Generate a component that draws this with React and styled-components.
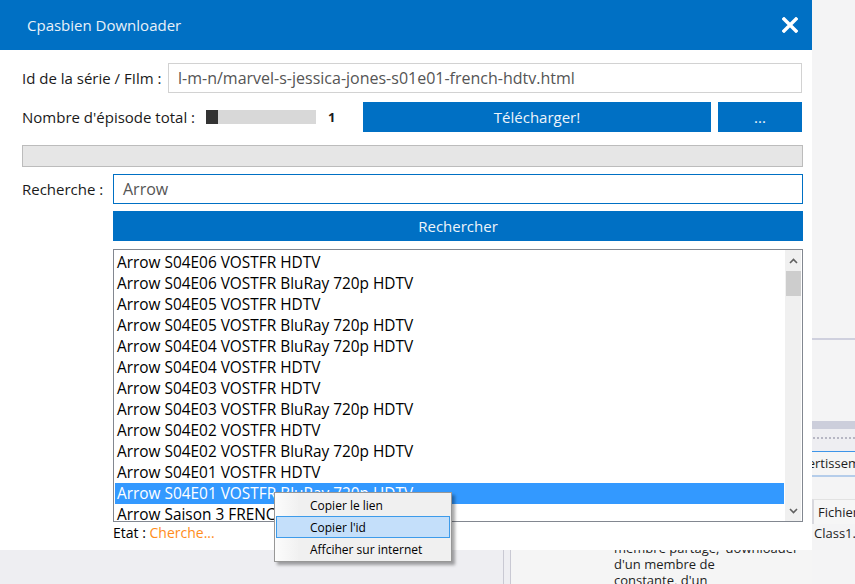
import React from 'react';
import styled, { createGlobalStyle } from 'styled-components';

const GlobalStyle = createGlobalStyle`
  html, body {
    margin: 0;
    padding: 0;
    background: #eeeef2;
  }
  body {
    font-family: "Open Sans", "Noto Sans", sans-serif;
  }
`;

const BLUE = '#0070c4';

const Desktop = styled.div`
  position: relative;
  width: 855px;
  height: 584px;
  overflow: hidden;
`;

/* IDE visible behind the window */
const Backdrop = styled.div`
  display: flex;
  height: 100%;
`;

const BackMain = styled.div`
  flex: 1;
  display: flex;
  flex-direction: column;
`;

const BackFiller = styled.div`
  flex: 1;
  background: #f4f4f5;
`;

const BottomStrip = styled.div`
  height: 44px;
  display: flex;
  background: #eeeef2;
`;

const BottomLeft = styled.div`
  width: 503px;
  border-right: 1px solid #c9c9d3;
`;

const BottomGap = styled.div`
  width: 6px;
  border-right: 1px solid #c9c9d3;
`;

const CodeHint = styled.div`
  flex: 1;
  background: #f5f5f5;
  padding-left: 103px;
  font-size: 13px;
  line-height: 16px;
  color: #1e1e1e;
`;

const SidePanel = styled.div`
  width: 43px;
  flex-shrink: 0;
  display: flex;
  flex-direction: column;
  background: #f4f4f5;
  overflow: hidden;
  white-space: nowrap;
`;

const Block = styled.div`
  height: ${p => p.$h}px;
  background: ${p => p.$bg || '#f4f4f5'};
  flex-shrink: 0;
`;

const DotRow = styled.div`
  height: 22px;
  flex-shrink: 0;
  background-color: #eeeef2;
  background-image: radial-gradient(#b7b7c4 0.8px, transparent 1px);
  background-size: 4px 4px;
  background-position: 0 7px;
  background-repeat: repeat-x;
`;

const TabStrip = styled.div`
  height: 23px;
  flex-shrink: 0;
  border-top: 1px solid #3e95e8;
  border-bottom: 2px solid #b5cdea;
  background: #f5f5f5;
  font-size: 13px;
  line-height: 22px;
  color: #1e1e1e;
  text-indent: -19px;
  overflow: hidden;
`;

const HeaderCell = styled.div`
  height: 24px;
  flex-shrink: 0;
  margin-top: 22px;
  border-top: 1px solid #e2e2e2;
  border-left: 2px solid #d8d8de;
  background: #f6f6f6;
  padding-left: 4px;
  font-size: 13px;
  line-height: 24px;
  color: #1e1e1e;
`;

const CellText = styled.div`
  padding-left: 2px;
  font-size: 13px;
  line-height: 18px;
  color: #1e1e1e;
`;

/* The application window */
const Window = styled.div`
  position: absolute;
  left: 0;
  top: 0;
  width: 812px;
  height: 550px;
  background: #ffffff;
  display: flex;
  flex-direction: column;
`;

const TitleBar = styled.div`
  height: 50px;
  flex-shrink: 0;
  background: ${BLUE};
  display: flex;
  align-items: center;
  justify-content: space-between;
  padding: 0 14px 0 27px;
  color: #e8f0f8;
  font-size: 15px;
`;

const Body = styled.div`
  flex: 1;
  display: flex;
  flex-direction: column;
  padding: 0 9px 0 22px;
  font-size: 15px;
  color: #1a1a1a;
`;

const Row = styled.div`
  display: flex;
  align-items: center;
  margin-top: ${p => p.$mt}px;
`;

const Label = styled.div`
  width: ${p => p.$w}px;
  flex-shrink: 0;
  white-space: nowrap;
`;

const TextInput = styled.div`
  flex: 1;
  height: 30px;
  box-sizing: border-box;
  border: 1px solid ${p => (p.$focus ? BLUE : '#d2d2d2')};
  padding-left: 9px;
  display: flex;
  align-items: center;
  font-size: 16px;
  color: #555555;
  margin-right: ${p => p.$mr || 0}px;
`;

const Slider = styled.div`
  width: 110px;
  height: 14px;
  background: #d8d8d8;
  display: flex;
`;

const Thumb = styled.div`
  width: 12px;
  background: #333333;
`;

const Count = styled.div`
  width: 35px;
  padding-left: 12px;
  box-sizing: border-box;
  font-weight: 700;
  font-size: 13px;
`;

const BlueButton = styled.div`
  height: 30px;
  width: ${p => (p.$w ? `${p.$w}px` : 'auto')};
  flex: ${p => (p.$w ? 'none' : 1)};
  margin-left: ${p => p.$ml || 0}px;
  background: ${BLUE};
  color: #eef4fa;
  display: flex;
  align-items: center;
  justify-content: center;
  font-size: 15px;
`;

const Progress = styled.div`
  height: 22px;
  box-sizing: border-box;
  margin-top: 13px;
  border: 1px solid #bcbcbc;
  background: #e6e6e6;
`;

const Indented = styled.div`
  margin-left: 91px;
  margin-top: ${p => p.$mt}px;
  display: flex;
`;

const ListBox = styled.div`
  flex: 1;
  height: 273px;
  box-sizing: border-box;
  border: 1px solid #828790;
  display: flex;
  overflow: hidden;
`;

const Items = styled.div`
  flex: 1;
  padding: 2px 1px 0 1px;
  overflow: hidden;
`;

const Item = styled.div`
  height: 21px;
  line-height: 21px;
  padding-left: 2px;
  font-size: 15.4px;
  white-space: nowrap;
  color: ${p => (p.$sel ? '#ffffff' : '#000000')};
  background: ${p => (p.$sel ? '#3399ff' : 'transparent')};
`;

const ScrollBar = styled.div`
  width: 16px;
  background: #f0f0f0;
  display: flex;
  flex-direction: column;
  align-items: center;
  margin-right: 1px;
`;

const ScrollArrow = styled.div`
  height: 21px;
  display: flex;
  align-items: center;
  justify-content: center;
`;

const ScrollThumb = styled.div`
  width: 15px;
  height: 25px;
  background: #cdcdcd;
`;

const ScrollTrack = styled.div`
  flex: 1;
`;

const Status = styled.div`
  margin-left: 91px;
  height: 22px;
  line-height: 22px;
  font-size: 14px;
  color: #000;
`;

const Orange = styled.span`
  color: #ff8c1a;
`;

/* Context menu over the list */
const Menu = styled.div`
  position: absolute;
  left: 274px;
  top: 492px;
  width: 178px;
  height: 70px;
  box-sizing: border-box;
  border: 1px solid #979797;
  background: linear-gradient(to right, #fcfcfc 0, #f1f1f1 23px, #f0f0f0 23px);
  box-shadow: 3px 3px 3px rgba(0, 0, 0, 0.35);
  padding: 1px;
  display: flex;
  flex-direction: column;
`;

const MenuItem = styled.div`
  height: 22px;
  box-sizing: border-box;
  padding-left: 33px;
  display: flex;
  align-items: center;
  font-size: 12px;
  color: #000;
  border: 1px solid ${p => (p.$hot ? '#3d9bea' : 'transparent')};
  background: ${p => (p.$hot ? '#c4dffa' : 'transparent')};
`;

const items = [
  'Arrow S04E06 VOSTFR HDTV',
  'Arrow S04E06 VOSTFR BluRay 720p HDTV',
  'Arrow S04E05 VOSTFR HDTV',
  'Arrow S04E05 VOSTFR BluRay 720p HDTV',
  'Arrow S04E04 VOSTFR BluRay 720p HDTV',
  'Arrow S04E04 VOSTFR HDTV',
  'Arrow S04E03 VOSTFR HDTV',
  'Arrow S04E03 VOSTFR BluRay 720p HDTV',
  'Arrow S04E02 VOSTFR HDTV',
  'Arrow S04E02 VOSTFR BluRay 720p HDTV',
  'Arrow S04E01 VOSTFR HDTV',
  'Arrow S04E01 VOSTFR BluRay 720p HDTV',
  'Arrow Saison 3 FRENCH HDTV',
];

const Chevron = ({ down }) => (
  <svg width="9" height="6" viewBox="0 0 9 6">
    <path
      d={down ? 'M1 1 L4.5 4.5 L8 1' : 'M1 5 L4.5 1.5 L8 5'}
      fill="none"
      stroke="#606060"
      strokeWidth="1.6"
    />
  </svg>
);

const CloseIcon = () => (
  <svg width="16" height="16" viewBox="0 0 16 16">
    <path d="M2 2 L14 14 M14 2 L2 14" stroke="#ffffff" strokeWidth="3.4" strokeLinecap="square" />
  </svg>
);

export default function App() {
  return (
    <>
      <GlobalStyle />
      <Desktop>
        <Backdrop>
          <BackMain>
            <BackFiller />
            <BottomStrip>
              <BottomLeft />
              <BottomGap />
              <CodeHint>
                membre partagé, 'downloader
                <br />
                d'un membre de
                <br />
                constante, d'un
              </CodeHint>
            </BottomStrip>
          </BackMain>
          <SidePanel>
            <Block $h={338} />
            <Block $h={2} $bg="#cfd0de" />
            <Block $h={81} />
            <Block $h={8} $bg="#cccedb" />
            <DotRow />
            <TabStrip>Avertissements</TabStrip>
            <HeaderCell>Fichier</HeaderCell>
            <CellText>Class1.vb</CellText>
          </SidePanel>
        </Backdrop>

        <Window>
          <TitleBar>
            <span>Cpasbien Downloader</span>
            <CloseIcon />
          </TitleBar>
          <Body>
            <Row $mt={13}>
              <Label $w={146}>Id de la série / FIlm :</Label>
              <TextInput $mr={1}>l-m-n/marvel-s-jessica-jones-s01e01-french-hdtv.html</TextInput>
            </Row>
            <Row $mt={9}>
              <Label $w={184}>Nombre d'épisode total :</Label>
              <Slider>
                <Thumb />
              </Slider>
              <Count>1</Count>
              <BlueButton $w={348} $ml={12}>Télécharger!</BlueButton>
              <BlueButton $w={84} $ml={7}>...</BlueButton>
            </Row>
            <Progress />
            <Row $mt={7}>
              <Label $w={91}>Recherche :</Label>
              <TextInput $focus>Arrow</TextInput>
            </Row>
            <Indented $mt={7}>
              <BlueButton>Rechercher</BlueButton>
            </Indented>
            <Indented $mt={8}>
              <ListBox>
                <Items>
                  {items.map((t, i) => (
                    <Item key={i} $sel={i === 11}>{t}</Item>
                  ))}
                </Items>
                <ScrollBar>
                  <ScrollArrow><Chevron /></ScrollArrow>
                  <ScrollThumb />
                  <ScrollTrack />
                  <ScrollArrow><Chevron down /></ScrollArrow>
                </ScrollBar>
              </ListBox>
            </Indented>
            <Status>
              Etat : <Orange>Cherche...</Orange>
            </Status>
          </Body>
        </Window>

        <Menu>
          <MenuItem>Copier le lien</MenuItem>
          <MenuItem $hot>Copier l'id</MenuItem>
          <MenuItem>Affciher sur internet</MenuItem>
        </Menu>
      </Desktop>
    </>
  );
}
